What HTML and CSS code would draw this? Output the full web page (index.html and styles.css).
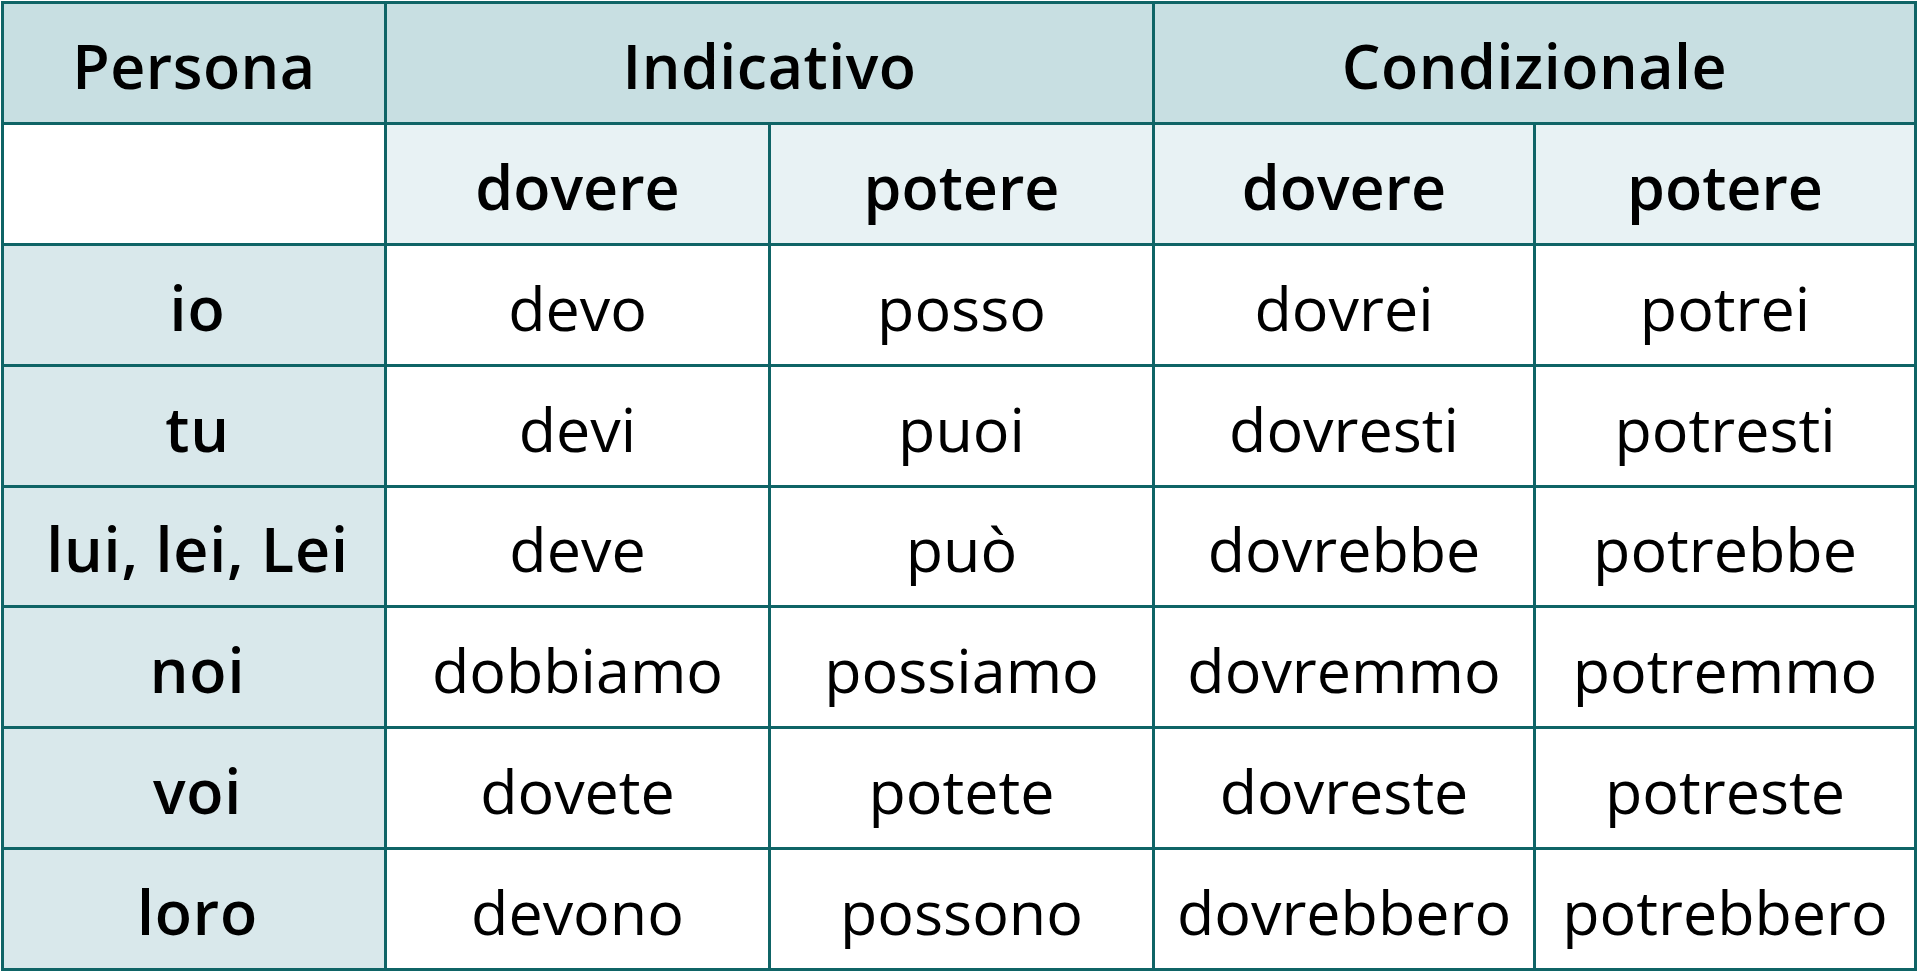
FILE: index.html
```html
<!DOCTYPE html>
<html lang="it">
<head>
<meta charset="utf-8">
<title>Dovere e potere</title>
<link rel="stylesheet" href="styles.css">
</head>
<body>
<table class="conj">
  <colgroup>
    <col class="c1"><col class="c2"><col class="c3"><col class="c4"><col class="c5">
  </colgroup>
  <thead>
    <tr class="head">
      <th>Persona</th>
      <th colspan="2">Indicativo</th>
      <th colspan="2">Condizionale</th>
    </tr>
    <tr class="sub">
      <th class="blank"></th>
      <th>dovere</th>
      <th>potere</th>
      <th>dovere</th>
      <th>potere</th>
    </tr>
  </thead>
  <tbody>
    <tr><th>io</th><td>devo</td><td>posso</td><td>dovrei</td><td>potrei</td></tr>
    <tr><th>tu</th><td>devi</td><td>puoi</td><td>dovresti</td><td>potresti</td></tr>
    <tr><th>lui, lei, Lei</th><td>deve</td><td>può</td><td>dovrebbe</td><td>potrebbe</td></tr>
    <tr><th>noi</th><td>dobbiamo</td><td>possiamo</td><td>dovremmo</td><td>potremmo</td></tr>
    <tr><th>voi</th><td>dovete</td><td>potete</td><td>dovreste</td><td>potreste</td></tr>
    <tr><th>loro</th><td>devono</td><td>possono</td><td>dovrebbero</td><td>potrebbero</td></tr>
  </tbody>
</table>
</body>
</html>
```

FILE: styles.css
```css
html, body {
  margin: 0;
  padding: 0;
  background: #ffffff;
}

body {
  padding: 1px;
  font-family: "Open Sans", "Noto Sans", "Liberation Sans", sans-serif;
  color: #000000;
}

.conj {
  width: 1916px;
  table-layout: fixed;
  border-collapse: separate;
  border-spacing: 0;
  border-top: 3px solid #0f6466;
  border-left: 3px solid #0f6466;
}

.c1 { width: 383px; }
.c2 { width: 384px; }
.c3 { width: 384px; }
.c4 { width: 381px; }
.c5 { width: 381px; }

.conj th,
.conj td {
  border-right: 3px solid #0f6466;
  border-bottom: 3px solid #0f6466;
  height: 120.875px;
  padding: 5px 0 0 0;
  text-align: center;
  vertical-align: middle;
  font-size: 61px;
  line-height: 1;
  box-sizing: border-box;
}

.conj td {
  font-weight: 400;
  background: #ffffff;
}

.conj th {
  font-weight: 600;
}

.head th {
  background: #c8dfe2;
  letter-spacing: 0.5px;
}

.sub th {
  background: #e8f2f4;
}

.sub th.blank {
  background: #ffffff;
}

tbody th {
  background: #d9e8eb;
  letter-spacing: 0.8px;
}

.conj tbody th {
  padding-left: 7px;
}
```
